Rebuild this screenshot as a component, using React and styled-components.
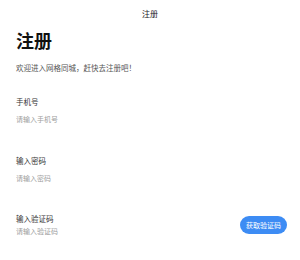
import styled, { createGlobalStyle } from 'styled-components';

const GlobalStyle = createGlobalStyle`
  body {
    margin: 0;
    background: #fff;
    font-family: "Noto Sans CJK SC", "Noto Sans", sans-serif;
  }
`;

const App = () => {
  return (
    <Page>
      <GlobalStyle />
      <TopBar>注册</TopBar>
      <Content>
        <Title>注册</Title>
        <Subtitle>欢迎进入网格同城，赶快去注册吧！</Subtitle>
        <Field>
          <Label>手机号</Label>
          <Input placeholder="请输入手机号" />
        </Field>
        <Field>
          <Label>输入密码</Label>
          <Input type="password" placeholder="请输入密码" />
        </Field>
        <CodeRow>
          <CodeField>
            <Label>输入验证码</Label>
            <Input compact placeholder="请输入验证码" />
          </CodeField>
          <CodeButton>获取验证码</CodeButton>
        </CodeRow>
      </Content>
    </Page>
  );
}

const Page = styled.div`
  width: 300px;
  height: 260px;
  background: #fff;
`;

const TopBar = styled.header`
  height: 28px;
  line-height: 28px;
  text-align: center;
  font-size: 8px;
  color: #222;
`;

const Content = styled.main`
  display: flex;
  flex-direction: column;
  padding: 0 13px 0 16px;
`;

const Title = styled.h1`
  margin: 0;
  font-size: 18px;
  line-height: 24px;
  font-weight: 700;
  color: #111;
`;

const Subtitle = styled.p`
  margin: 10px 0 0;
  font-size: 7.5px;
  line-height: 11px;
  color: #555;
`;

const Field = styled.div`
  display: flex;
  flex-direction: column;
  margin-top: 23px;

  & + & {
    margin-top: 28px;
  }
`;

const Label = styled.label`
  font-size: 7.5px;
  line-height: 11px;
  color: #333;
`;

const Input = styled.input`
  margin-top: ${({ compact }) => (compact ? '0' : '3px')};
  height: ${({ compact }) => (compact ? '13px' : '17px')};
  padding: 0;
  border: none;
  outline: none;
  background: transparent;
  font-family: inherit;
  font-size: 7px;
  color: #333;

  &::placeholder {
    color: #a0a0a0;
  }
`;

const CodeRow = styled.div`
  display: flex;
  align-items: center;
  justify-content: space-between;
  margin-top: 27px;
`;

const CodeField = styled.div`
  display: flex;
  flex-direction: column;
`;

const CodeButton = styled.button`
  width: 47px;
  height: 18px;
  padding: 0;
  border: none;
  border-radius: 9px;
  background: #3d8cf4;
  color: #fff;
  font-family: inherit;
  font-size: 7px;
  cursor: pointer;
`;

export default App;
